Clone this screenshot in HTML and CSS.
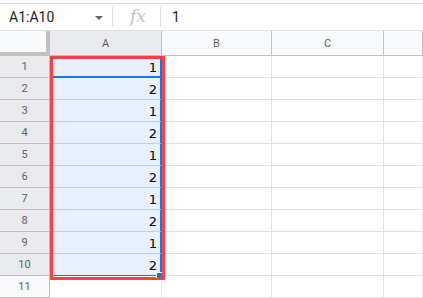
FILE: index.html
```html
<!DOCTYPE html>
<html lang="en">
<head>
  <meta charset="UTF-8">
  <title>Sheet</title>
  <link rel="stylesheet" href="styles.css">
</head>
<body>
  <div class="formula-bar">
    <div class="name-box">
      <span class="range">A1:A10</span>
      <span class="caret"></span>
    </div>
    <div class="fx">fx</div>
    <div class="value">1</div>
  </div>

  <div class="sheet">
    <div class="corner"></div>
    <div class="col-head active">A</div>
    <div class="col-head">B</div>
    <div class="col-head">C</div>
    <div class="col-head"></div>

    <div class="row-head active">1</div><div class="cell sel first">1</div><div class="cell"></div><div class="cell"></div><div class="cell"></div>
    <div class="row-head active">2</div><div class="cell sel">2</div><div class="cell"></div><div class="cell"></div><div class="cell"></div>
    <div class="row-head active">3</div><div class="cell sel">1</div><div class="cell"></div><div class="cell"></div><div class="cell"></div>
    <div class="row-head active">4</div><div class="cell sel">2</div><div class="cell"></div><div class="cell"></div><div class="cell"></div>
    <div class="row-head active">5</div><div class="cell sel">1</div><div class="cell"></div><div class="cell"></div><div class="cell"></div>
    <div class="row-head active">6</div><div class="cell sel">2</div><div class="cell"></div><div class="cell"></div><div class="cell"></div>
    <div class="row-head active">7</div><div class="cell sel">1</div><div class="cell"></div><div class="cell"></div><div class="cell"></div>
    <div class="row-head active">8</div><div class="cell sel">2</div><div class="cell"></div><div class="cell"></div><div class="cell"></div>
    <div class="row-head active">9</div><div class="cell sel">1</div><div class="cell"></div><div class="cell"></div><div class="cell"></div>
    <div class="row-head active">10</div><div class="cell sel last">2</div><div class="cell"></div><div class="cell"></div><div class="cell"></div>
    <div class="row-head">11</div><div class="cell"></div><div class="cell"></div><div class="cell"></div><div class="cell"></div>

    <div class="highlight"></div>
    <div class="fill-handle"></div>
  </div>
</body>
</html>
```

FILE: styles.css
```css
body {
  margin: 0;
  width: 423px;
  height: 298px;
  overflow: hidden;
  background: #fff;
  font-family: Roboto, "Liberation Sans", sans-serif;
  color: #202124;
}

.formula-bar {
  display: flex;
  align-items: center;
  margin-top: 3px;
  height: 26px;
  border-top: 1px solid #e0e0e0;
  border-bottom: 1px solid #e0e0e0;
}

.name-box {
  display: flex;
  align-items: center;
  justify-content: space-between;
  width: 113px;
  height: 20px;
  padding-left: 9px;
  padding-right: 9px;
  border-right: 1px solid #e0e0e0;
  box-sizing: border-box;
}

.range {
  font-size: 14px;
}

.caret {
  width: 0;
  height: 0;
  border-left: 4px solid transparent;
  border-right: 4px solid transparent;
  border-top: 4px solid #5f6368;
  margin-top: 2px;
}

.fx {
  width: 48px;
  height: 20px;
  box-sizing: border-box;
  padding-left: 17px;
  border-right: 1px solid #e0e0e0;
  font-family: "DejaVu Serif", "Liberation Serif", serif;
  font-style: italic;
  font-size: 17px;
  line-height: 19px;
  color: #bdc1c6;
}

.value {
  padding-left: 11px;
  font-size: 14px;
}

.sheet {
  position: relative;
  display: grid;
  grid-template-columns: 50px 112px 110px 112px 1fr;
  grid-template-rows: 25px repeat(11, 22px);
}

.corner {
  background: #f8f9fa;
  border-right: 4px solid #c0c0c0;
  border-bottom: 4px solid #c0c0c0;
}

.col-head {
  display: flex;
  align-items: center;
  justify-content: center;
  background: #f8f9fa;
  border-right: 1px solid #c0c0c0;
  border-bottom: 1px solid #c0c0c0;
  font-size: 11px;
  color: #5f6368;
}

.row-head {
  display: flex;
  align-items: center;
  justify-content: center;
  background: #f8f9fa;
  border-right: 1px solid #c0c0c0;
  border-bottom: 1px solid #c0c0c0;
  font-size: 11px;
  color: #5f6368;
}

.col-head.active,
.row-head.active {
  background: #e8eaed;
}

.cell {
  border-right: 1px solid #e2e2e3;
  border-bottom: 1px solid #e2e2e3;
  box-sizing: border-box;
  font-family: "DejaVu Sans", sans-serif;
  font-size: 13px;
  line-height: 24px;
  text-align: right;
  padding-right: 3px;
  color: #000;
}

.cell.sel {
  background: #e8f0fe;
  border-right: 2px solid #1a73e8;
  border-bottom-color: #c8cfd9;
}

.cell.first {
  border-bottom: 2px solid #1a73e8;
}

.cell.last {
  border-bottom: 1px solid #1a73e8;
}

/* annotation box around the selection */
.highlight {
  position: absolute;
  left: 50px;
  top: 25px;
  width: 115px;
  height: 224px;
  border: 3px solid #fb4143;
  box-sizing: border-box;
}

.fill-handle {
  position: absolute;
  left: 156px;
  top: 241px;
  width: 6px;
  height: 6px;
  background: #1a73e8;
  border-left: 1px solid #fff;
  border-top: 1px solid #fff;
  box-sizing: border-box;
}
```
